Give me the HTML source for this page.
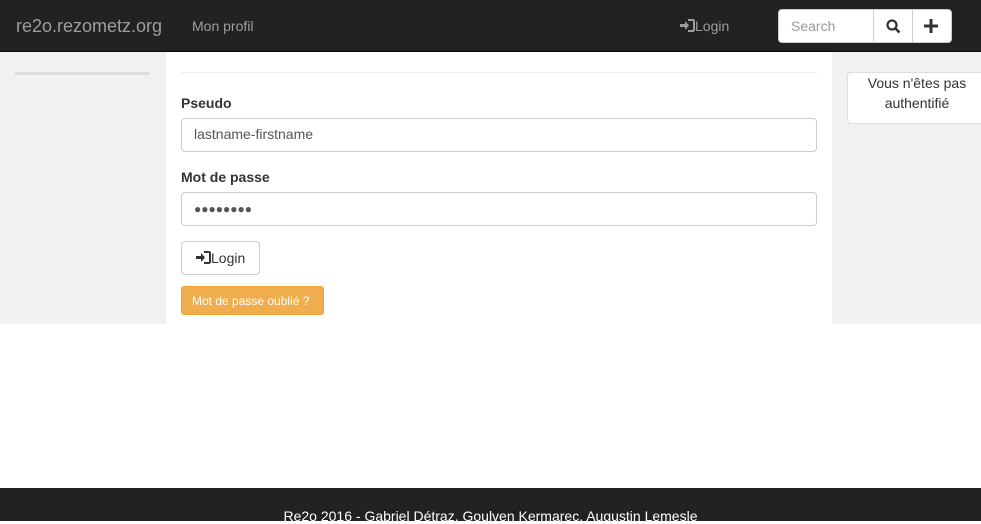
<!DOCTYPE html>
<html><head><meta charset="utf-8"><style>
*{box-sizing:border-box;margin:0;padding:0}
body{width:981px;height:521px;position:relative;font-family:"Liberation Sans",Arial,sans-serif;font-size:14px;color:#333;background:#fff;overflow:hidden}
.nav{position:absolute;left:0;top:0;width:981px;height:52px;background:#222;border-bottom:1px solid #080808}
.brand{position:absolute;left:16px;top:16px;font-size:18px;color:#9d9d9d}
.nl{position:absolute;top:18px;color:#9d9d9d;font-size:14px}
.sb{position:absolute;left:778px;top:9px;width:174px;height:34px;background:#fff;border-radius:4px;border:1px solid #ccc}
.sb .in{position:absolute;left:12px;top:8px;color:#999}
.sb .d1{position:absolute;left:94px;top:0;width:1px;height:32px;background:#ccc}
.sb .d2{position:absolute;left:133px;top:0;width:1px;height:32px;background:#ccc}
.band{position:absolute;left:0;top:52px;width:981px;height:272px;background:#f1f1f1}
.main{position:absolute;left:166px;top:52px;width:666px;height:272px;background:#fff}
.hr{position:absolute;left:15px;top:20px;width:636px;height:1px;background:#eee}
.lbl{position:absolute;left:15px;font-weight:bold;font-size:14px}
.fc{position:absolute;left:15px;width:636px;height:34px;border:1px solid #ccc;border-radius:4px;padding:7px 12px;color:#555}
.btn{position:absolute;left:15px;top:189px;width:79px;height:34px;border:1px solid #ccc;border-radius:4px;padding:8px 0 0 14px}
.warn{position:absolute;left:15px;top:234px;width:143px;height:29px;background:#f0ad4e;border:1px solid #eea236;border-radius:3px;color:#fff;font-size:12px;padding:7px 0 0 10px}
.side{position:absolute;left:15px;top:72px;width:135px;height:3px;background:#ddd}
.auth{position:absolute;left:847px;top:72px;width:140px;height:52px;background:#fff;border:1px solid #ddd;border-radius:4px;text-align:center;line-height:20px;padding-top:0;color:#333}
.foot{position:absolute;left:0;top:488px;width:981px;height:33px;background:#222;color:#fff;text-align:center;font-size:14px;padding-top:20px}
</style></head><body>
<div class="nav">
<div class="brand">re2o.rezometz.org</div>
<div class="nl" style="left:192px">Mon profil</div>
<div class="nl" style="left:680px"><svg width="15" height="13" viewBox="0 0 15 13" style="vertical-align:-1px"><path d="M0 5h5V2l4 4.5-4 4.5V8H0z" fill="#9d9d9d"/><path d="M8 1h4.5Q14 1 14 2.5v8Q14 12 12.5 12H8" stroke="#9d9d9d" stroke-width="2" fill="none"/></svg>Login</div>
<div class="sb"><span class="in">Search</span><div class="d1"></div><div class="d2"></div>
<svg style="position:absolute;left:107px;top:9px" width="15" height="15" viewBox="0 0 15 15"><circle cx="6" cy="6" r="4.5" stroke="#333" stroke-width="2.2" fill="none"/><path d="M9 9l4.5 4.5" stroke="#333" stroke-width="2.6"/></svg>
<svg style="position:absolute;left:145px;top:9px" width="14" height="14" viewBox="0 0 14 14"><path d="M7 0v14M0 7h14" stroke="#333" stroke-width="3"/></svg></div>
</div>
<div class="band"></div>
<div class="side"></div>
<div class="main">
<div class="hr"></div>
<div class="lbl" style="top:43px">Pseudo</div>
<div class="fc" style="top:66px">lastname-firstname</div>
<div class="lbl" style="top:117px">Mot de passe</div>
<div class="fc" style="top:140px;letter-spacing:0;font-size:12px;padding-top:9px">●●●●●●●●</div>
<div class="btn"><svg width="15" height="13" viewBox="0 0 15 13" style="vertical-align:-1px"><path d="M0 5h5V2l4 4.5-4 4.5V8H0z" fill="#333"/><path d="M8 1h4.5Q14 1 14 2.5v8Q14 12 12.5 12H8" stroke="#333" stroke-width="2" fill="none"/></svg>Login</div>
<div class="warn">Mot de passe oublié ?</div>
</div>
<div class="auth">Vous n'êtes pas<br>authentifié</div>
<div class="foot">Re2o 2016 - Gabriel Détraz, Goulven Kermarec, Augustin Lemesle</div>
</body></html>
